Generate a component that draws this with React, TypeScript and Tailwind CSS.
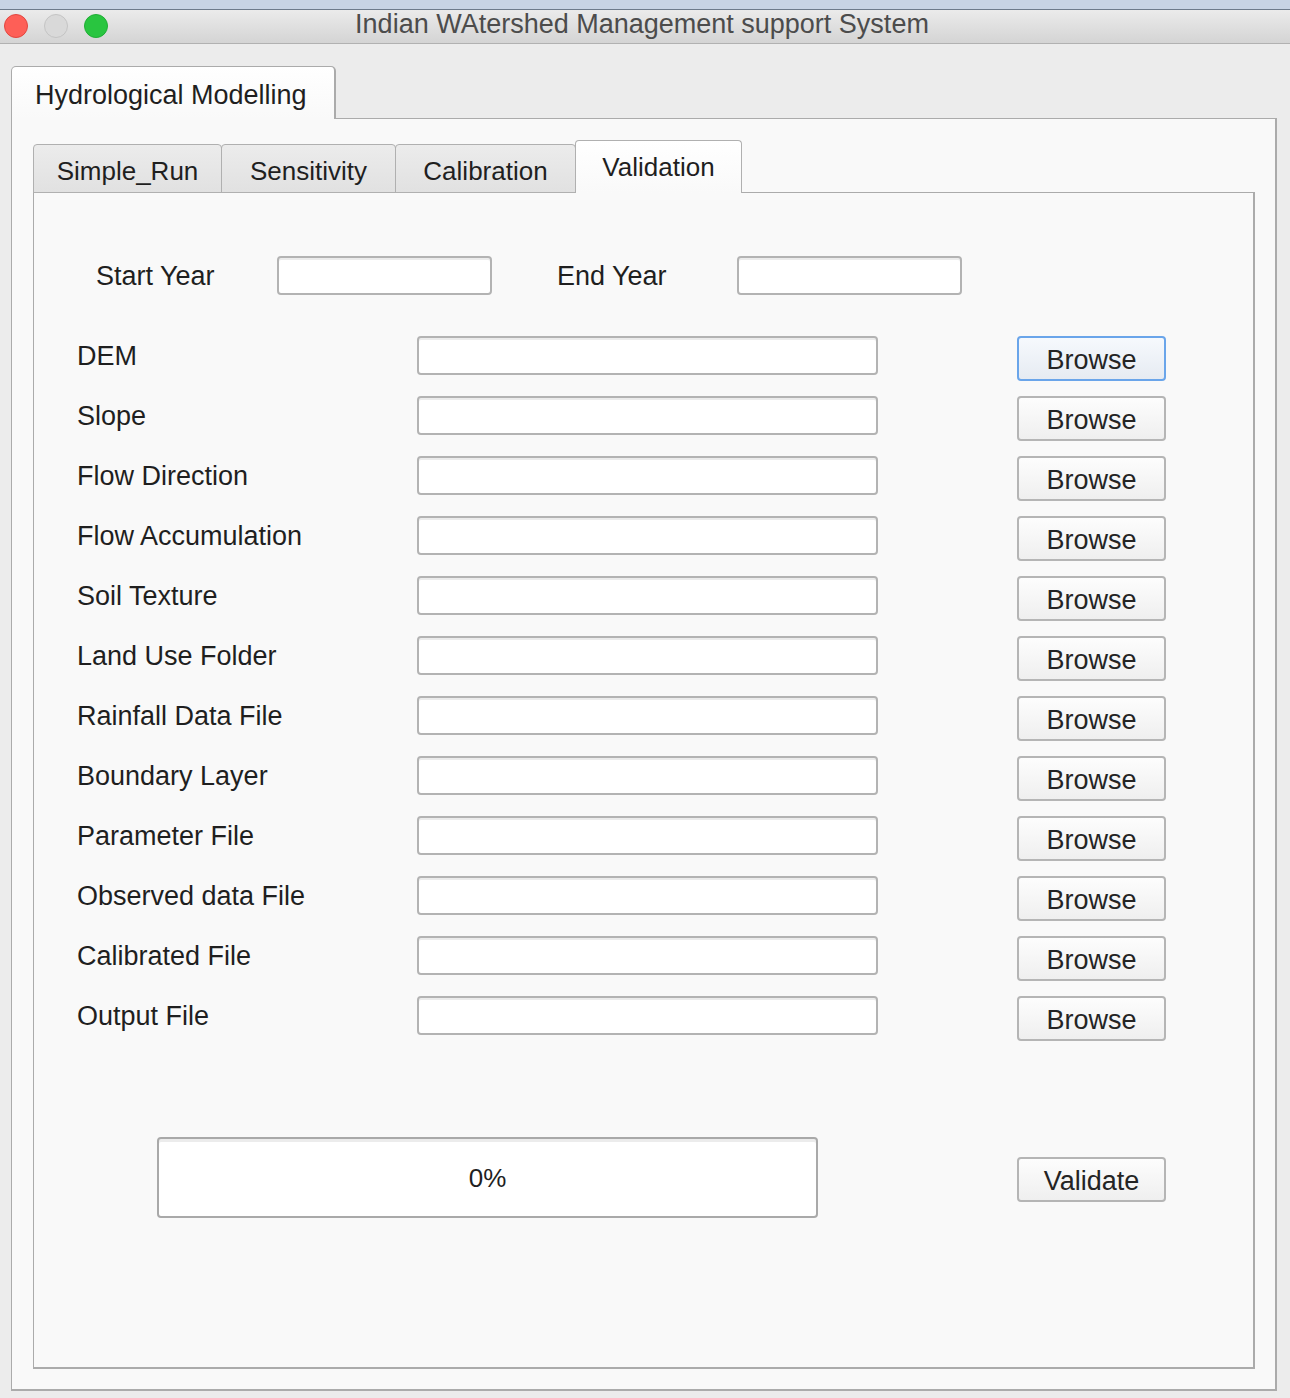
import React from 'react';

const fields = [
  'DEM',
  'Slope',
  'Flow Direction',
  'Flow Accumulation',
  'Soil Texture',
  'Land Use Folder',
  'Rainfall Data File',
  'Boundary Layer',
  'Parameter File',
  'Observed data File',
  'Calibrated File',
  'Output File',
];

const tabs = ['Simple_Run', 'Sensitivity', 'Calibration', 'Validation'];
const tabWidths: Record<string, string> = {
  Simple_Run: 'w-[189px]',
  Sensitivity: 'w-[175px]',
  Calibration: 'w-[181px]',
  Validation: 'w-[167px]',
};

function TextBox({ className }: { className: string }) {
  return (
    <div
      className={`h-[39px] rounded-[4px] border-2 border-[#b3b3b3] bg-white shadow-[inset_0_2px_0_#ececec] ${className}`}
    />
  );
}

function Button({ label, focused }: { label: string; focused?: boolean }) {
  return (
    <button
      className={`flex h-[45px] w-[149px] items-center justify-center rounded-[4px] border-2 pt-[3px] text-[27px] text-[#242424] ${
        focused
          ? 'border-[#6aa5ea] bg-gradient-to-b from-[#f6f9fd] to-[#e6ebf2]'
          : 'border-[#b5b5b5] bg-gradient-to-b from-[#fdfdfd] to-[#efefef]'
      }`}
    >
      {label}
    </button>
  );
}

export default function App() {
  return (
    <div
      className="h-[1398px] w-[1290px] overflow-hidden bg-[#ececec] text-[#1f1f1f]"
      style={{ fontFamily: '"Liberation Sans", Arial, sans-serif' }}
    >
      {/* window behind */}
      <div className="h-[10px] border-b border-[#6e7a8c] bg-[#c8d3e5]" />

      {/* title bar */}
      <div className="flex h-[34px] items-center border-b border-[#b1b1b1] bg-gradient-to-b from-[#ebebeb] to-[#d4d4d4]">
        <div className="flex w-[120px] items-center gap-[16px] pb-[2px] pl-[4px]">
          <span className="h-[24px] w-[24px] rounded-full border border-[#e2463f] bg-[#fe5f57]" />
          <span className="h-[24px] w-[24px] rounded-full border border-[#c4c4c4] bg-[#d9d9d9]" />
          <span className="h-[24px] w-[24px] rounded-full border border-[#1fae35] bg-[#29c540]" />
        </div>
        <div className="flex-1 pb-[6px] text-center text-[27px] leading-[28px] text-[#4c4c4c]">
          Indian WAtershed Management support System
        </div>
        <div className="w-[126px]" />
      </div>

      {/* outer tab widget */}
      <div className="ml-[11px] mt-[22px] w-[1266px]">
        <div className="relative z-10 -mb-px flex h-[53px] w-[325px] items-center rounded-t-[5px] border-l border-r-2 border-t border-[#ababab] bg-gradient-to-b from-white to-[#f9f9f9] pl-[23px] pt-[4px] text-[27px]">
          Hydrological Modelling
        </div>
        <div className="h-[1273px] border border-b-2 border-r-2 border-[#ababab] bg-[#f9f9f9]">
          <div className="ml-[21px] mt-[21px] w-[1222px]">
            {/* inner tabs */}
            <div className="relative z-10 -mb-px flex items-end">
              {tabs.map((t, i) => {
                const selected = t === 'Validation';
                return (
                  <div
                    key={t}
                    className={`flex items-center justify-center rounded-t-[4px] border-l border-r border-t border-[#b0b0b0] text-[26px] ${
                      tabWidths[t]
                    } ${i > 0 ? '-ml-px' : ''} ${
                      selected
                        ? 'h-[53px] bg-gradient-to-b from-white to-[#f9f9f9]'
                        : 'h-[49px] border-b bg-gradient-to-b from-[#ececec] to-[#e1e1e1] pt-[6px]'
                    }`}
                  >
                    {t}
                  </div>
                );
              })}
            </div>

            {/* inner pane */}
            <div className="h-[1177px] border border-b-2 border-r-2 border-[#ababab] bg-[#f9f9f9] pt-[63px]">
              <div className="flex h-[39px] items-center pl-[62px] text-[27px] leading-[39px]">
                <span className="h-[39px] w-[181px] pt-[1px]">Start Year</span>
                <TextBox className="w-[215px]" />
                <span className="ml-[65px] h-[39px] w-[180px] pt-[1px]">End Year</span>
                <TextBox className="w-[225px]" />
              </div>

              <div className="mt-[41px] flex flex-col">
                {fields.map((f, i) => (
                  <div key={f} className="flex h-[60px] items-start pl-[43px]">
                    <span className="h-[39px] w-[340px] pt-[1px] text-[27px] leading-[39px]">{f}</span>
                    <TextBox className="w-[461px]" />
                    <div className="ml-[139px]">
                      <Button label="Browse" focused={i === 0} />
                    </div>
                  </div>
                ))}
              </div>

              <div className="mt-[81px] flex items-center pl-[123px]">
                <div className="flex h-[81px] w-[661px] items-center justify-center rounded-[4px] border-2 border-[#a9a9a9] bg-white pt-[2px] text-[26px] shadow-[inset_0_3px_0_#ececec]">
                  0%
                </div>
                <div className="ml-[199px] mt-[4px]">
                  <Button label="Validate" />
                </div>
              </div>
            </div>
          </div>
        </div>
      </div>
    </div>
  );
}
